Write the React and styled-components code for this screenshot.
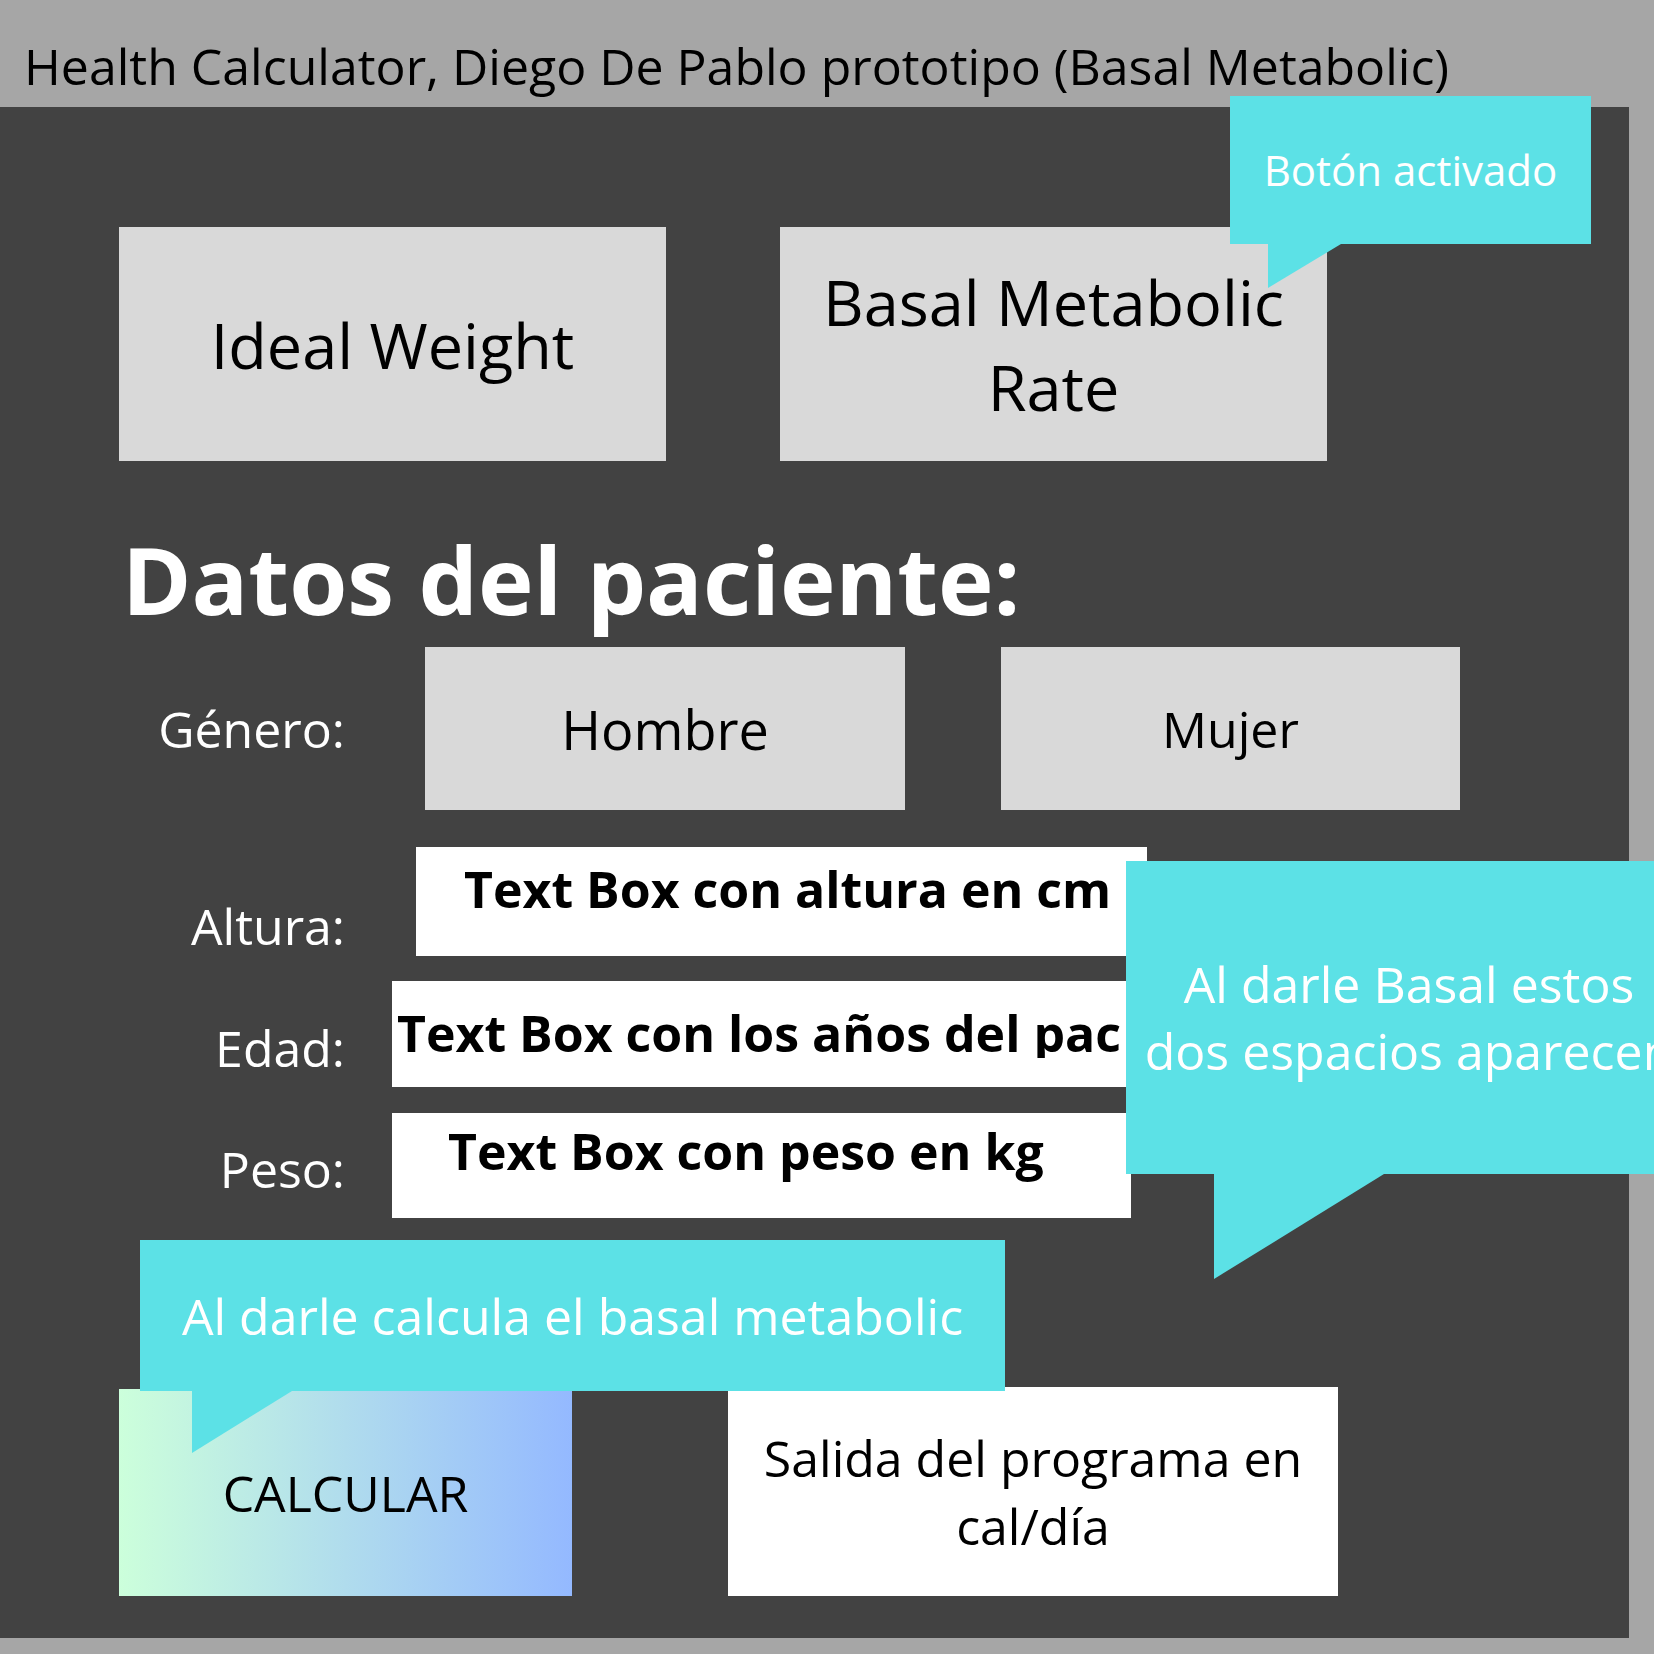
import React from 'react';
import styled, { createGlobalStyle } from 'styled-components';

const colors = {
  frame: '#a6a6a6',
  panel: '#424242',
  key: '#d9d9d9',
  note: '#5ce1e6',
  white: '#ffffff',
  black: '#000000',
};

const GlobalStyle = createGlobalStyle`
  html, body {
    margin: 0;
    padding: 0;
  }

  body {
    font-family: "Open Sans", "Noto Sans", sans-serif;
    background-color: ${colors.frame};
  }
`;

const Page = styled.div`
  position: relative;
  width: 1654px;
  height: 1654px;
  overflow: hidden;
  background-color: ${colors.frame};
`;

const Title = styled.h1`
  margin: 0;
  height: 107px;
  box-sizing: border-box;
  padding: 41px 0 0 24px;
  font-size: 50px;
  line-height: 1;
  font-weight: 400;
  color: ${colors.black};
  white-space: nowrap;
`;

const Panel = styled.main`
  position: relative;
  width: 1629px;
  height: 1531px;
  box-sizing: border-box;
  padding: 120px 0 0 119px;
  background-color: ${colors.panel};
`;

const ModeRow = styled.div`
  display: flex;
  gap: 114px;
`;

const ModeButton = styled.div`
  display: flex;
  align-items: center;
  justify-content: center;
  width: 547px;
  height: 234px;
  background-color: ${colors.key};
  color: ${colors.black};
  font-size: 63px;
  line-height: 85px;
  text-align: center;
`;

const Heading = styled.h2`
  margin: 71px 0 0 3px;
  font-size: 94px;
  line-height: 94px;
  font-weight: 700;
  color: ${colors.white};
`;

const Form = styled.section`
  margin-top: 21px;
`;

const GenderRow = styled.div`
  display: flex;
  align-items: center;
  height: 163px;
`;

const FieldRow = styled.div`
  display: flex;
  align-items: flex-start;
  margin-top: ${(p) => p.$gap}px;
`;

const Label = styled.div`
  width: 226px;
  padding-top: ${(p) => p.$drop || 0}px;
  font-size: 50px;
  line-height: 50px;
  color: ${colors.white};
  text-align: right;
`;

const Option = styled.div`
  display: flex;
  align-items: center;
  justify-content: center;
  width: ${(p) => p.$width}px;
  height: 100%;
  margin-left: ${(p) => p.$offset}px;
  background-color: ${colors.key};
  color: ${colors.black};
  font-size: ${(p) => p.$size}px;
  line-height: 1;
`;

const TextBox = styled.div`
  width: ${(p) => p.$width}px;
  height: ${(p) => p.$height}px;
  margin-left: ${(p) => p.$offset}px;
  box-sizing: border-box;
  padding: ${(p) => p.$pad};
  overflow: hidden;
  background-color: ${colors.white};
  color: ${colors.black};
  font-size: 50px;
  line-height: 1;
  font-weight: 700;
  white-space: nowrap;
`;

const Clipped = styled.span`
  display: inline-block;
  max-width: ${(p) => p.$max}px;
  overflow: hidden;
  vertical-align: top;
`;

const Actions = styled.div`
  display: flex;
  align-items: flex-end;
  gap: 156px;
  margin-top: 169px;
`;

const CalcButton = styled.div`
  display: flex;
  align-items: center;
  justify-content: center;
  width: 453px;
  height: 207px;
  background: linear-gradient(90deg, #ccffdb 0%, #94b9ff 100%);
  color: ${colors.black};
  font-size: 50px;
  line-height: 1;
`;

const Output = styled.div`
  display: flex;
  align-items: center;
  justify-content: center;
  width: 610px;
  height: 209px;
  background-color: ${colors.white};
  color: ${colors.black};
  font-size: 50px;
  line-height: 68px;
  text-align: center;
`;

const Note = styled.div`
  position: absolute;
  top: ${(p) => p.$top}px;
  left: ${(p) => p.$left}px;
  width: ${(p) => p.$width}px;
  height: ${(p) => p.$height}px;
  display: flex;
  align-items: center;
  justify-content: center;
  background-color: ${colors.note};
  color: ${colors.white};
  font-size: ${(p) => p.$size}px;
  line-height: ${(p) => p.$lh || p.$size}px;
  text-align: center;
  white-space: nowrap;
  z-index: 2;

  &::after {
    content: '';
    position: absolute;
    top: 100%;
    left: ${(p) => p.$tailX}px;
    width: ${(p) => p.$tailW}px;
    height: ${(p) => p.$tailH}px;
    background-color: ${colors.note};
    clip-path: polygon(0 0, 100% 0, 0 100%);
  }
`;

export default function App() {
  return (
    <>
      <GlobalStyle />
      <Page>
        <Title>Health Calculator, Diego De Pablo prototipo (Basal Metabolic)</Title>
        <Panel>
          <ModeRow>
            <ModeButton>Ideal Weight</ModeButton>
            <ModeButton>
              Basal Metabolic
              <br />
              Rate
            </ModeButton>
          </ModeRow>

          <Heading>Datos del paciente:</Heading>

          <Form>
            <GenderRow>
              <Label>Género:</Label>
              <Option $offset={80} $width={480} $size={54}>
                Hombre
              </Option>
              <Option $offset={96} $width={459} $size={50}>
                Mujer
              </Option>
            </GenderRow>

            <FieldRow $gap={37}>
              <Label $drop={54}>Altura:</Label>
              <TextBox $offset={71} $width={731} $height={109} $pad="17px 0 0 48px">
                Text Box con altura en cm
              </TextBox>
            </FieldRow>

            <FieldRow $gap={25}>
              <Label $drop={42}>Edad:</Label>
              <TextBox $offset={47} $width={743} $height={106} $pad="27px 0 0 5px">
                <Clipped $max={726}>Text Box con los años del paciente</Clipped>
              </TextBox>
            </FieldRow>

            <FieldRow $gap={26}>
              <Label $drop={31}>Peso:</Label>
              <TextBox $offset={47} $width={739} $height={105} $pad="13px 0 0 56px">
                Text Box con peso en kg
              </TextBox>
            </FieldRow>
          </Form>

          <Actions>
            <CalcButton>CALCULAR</CalcButton>
            <Output>
              Salida del programa en
              <br />
              cal/día
            </Output>
          </Actions>

          <Note $top={-11} $left={1230} $width={361} $height={148} $size={42} $tailX={38} $tailW={73} $tailH={44}>
            Botón activado
          </Note>
          <Note
            $top={754}
            $left={1126}
            $width={566}
            $height={313}
            $size={50}
            $lh={67}
            $tailX={88}
            $tailW={170}
            $tailH={105}
          >
            Al darle Basal estos
            <br />
            dos espacios aparecen
          </Note>
          <Note $top={1133} $left={140} $width={865} $height={151} $size={50} $tailX={52} $tailW={100} $tailH={62}>
            Al darle calcula el basal metabolic
          </Note>
        </Panel>
      </Page>
    </>
  );
}
